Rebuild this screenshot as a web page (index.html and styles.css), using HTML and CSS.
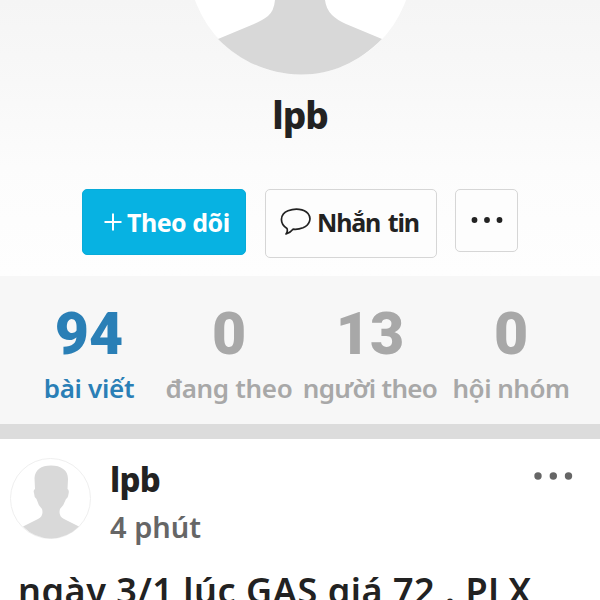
FILE: index.html
```
<!DOCTYPE html>
<html lang="vi">
<head>
<meta charset="utf-8">
<title>lpb</title>
<link rel="stylesheet" href="styles.css">
</head>
<body>
<header class="profile">
  <svg class="portrait" width="240" height="75" viewBox="180 0 240 75">
    <circle cx="300.500" cy="-37.500" r="112" fill="#fff"/>
    <path d="M275 0Q274 11 268 16Q263 20 254 24L218 39C242 63 270 74 300 74.500S358 63 382 39L346 24Q337 20 332 15Q326 9 325 0Z" fill="#d8d8d8"/>
  </svg>
  <h1 class="name"><span>lpb</span></h1>
  <div class="actions">
    <button class="button follow">
      <svg width="18" height="20" viewBox="0 0 18 20"><path d="M9 1.500v17M.5 10h17" stroke="#fff" stroke-width="2"/></svg>
      <span class="follow-text">Theo dõi</span>
    </button>
    <button class="button message">
      <svg width="32" height="28" viewBox="0 0 32 28"><path d="M7 20.500C-1 15.500 0 6 8 2.800C15 0 24 .7 28 5.500C32 10.500 29.500 17 23 19.800Q18 21.800 13 21.200Q10.500 24.500 6 26Q8 23.500 7 20.500Z" fill="none" stroke="#222" stroke-width="1.700" stroke-linejoin="round"/></svg>
      <span class="message-text">Nhắn tin</span>
    </button>
    <button class="button more">
      <svg width="32" height="6" viewBox="0 0 32 6" fill="#222"><circle cx="3.500" cy="3" r="2.900"/><circle cx="16" cy="3" r="2.900"/><circle cx="28.500" cy="3" r="2.900"/></svg>
    </button>
  </div>
</header>
<nav class="stats">
  <a class="stat active"><b>94</b><span>bài viết</span></a>
  <a class="stat"><b>0</b><span>đang theo</span></a>
  <a class="stat"><b>13</b><span class="followers">người theo</span></a>
  <a class="stat"><b>0</b><span class="groups">hội nhóm</span></a>
</nav>
<article class="post">
  <div class="post-head">
    <svg class="avatar" width="82" height="82" viewBox="0 0 82 82">
      <circle cx="40.500" cy="40.500" r="40" fill="#fff" stroke="#efefef"/>
      <path d="M41 7.500C51 7.500 58 12 58 21L57.500 31Q59.500 32 58.500 36Q58 40 56 41Q54 47 50 51Q48 58 54 61L69 68.500Q57 80 41 80.500Q24 80 13 68.500L28 61Q34 58 32 51Q28 47 26.500 41Q24 39 24 35Q23 32 25 31L24.500 20C25 12 31 7.500 41 7.500Z" fill="#d9d9d9"/>
    </svg>
    <div class="byline">
      <strong class="author">lpb</strong>
      <span class="time">4 phút</span>
    </div>
    <svg class="post-more" width="40" height="8" viewBox="0 0 40 8" fill="#666"><circle cx="5" cy="4" r="3.700"/><circle cx="20.300" cy="4" r="3.700"/><circle cx="35.500" cy="4" r="3.700"/></svg>
  </div>
  <p class="content">ngày 3/1 lúc GAS giá 72 . PLX</p>
</article>
</body>
</html>
```

FILE: styles.css
```
* { box-sizing: border-box; }
html { height: 100%; overflow: hidden; }
body { margin: 0; height: 600px; overflow: hidden; background: #fff; color: #222; font-family: "Noto Sans", sans-serif; white-space: nowrap; }
svg { display: block; flex: none; }
.profile { height: 276px; background: linear-gradient(#f5f5f5, #f8f8f8 30%, #fcfcfc 60%, #fefefe); }
.portrait { margin: 0 auto; }
.name { margin: 15px 0 0; height: 50px; line-height: 50px; text-align: center; font-size: 37px; font-weight: 800; letter-spacing: -1.1px; }
.actions { display: flex; align-items: flex-start; padding: 49px 0 0 82px; }
.button { display: flex; align-items: center; margin: 0; padding: 0; border: 1.5px solid #d6d6d6; border-radius: 5px; background: #fdfdfd; color: #222; font: 700 25px "Noto Sans", sans-serif; }
.follow { width: 164px; height: 66px; padding: 0 0 1px 21px; gap: 5px; border-color: #08abd9; background: #07b2e2; color: #fff; }
.follow-text { letter-spacing: -.5px; }
.message { width: 172px; height: 69px; margin-left: 19px; padding: 0 0 3px 14px; gap: 5px; }
.message-text { letter-spacing: -1.2px; word-spacing: 2.5px; }
.more { width: 63px; height: 63px; margin-left: 18px; padding-bottom: 2px; justify-content: center; }
.stats { display: grid; grid-template-columns: 132px 148px 134px 148px; padding: 31px 0 0 23px; height: 148px; background: #f7f7f7; color: #a8a8a8; }
.stat { display: flex; flex-direction: column; align-items: center; }
.stat b { height: 54px; font: 900 59px/54px Roboto, sans-serif; }
.stat span { height: 40px; line-height: 40px; margin-top: 7px; font-size: 26px; font-weight: 600; letter-spacing: -.3px; }
.stat .followers { letter-spacing: -.7px; }
.stat .groups { letter-spacing: -.5px; }
.active { color: #2a7fb6; }
.post { border-top: 15px solid #dcdcdc; height: 176px; }
.post-head { display: flex; padding: 19px 0 0 10px; height: 127px; }
.byline { display: flex; flex-direction: column; width: 440px; padding-left: 18px; }
.author { height: 43px; line-height: 43px; font-size: 33px; font-weight: 800; letter-spacing: -.7px; }
.time { height: 52px; line-height: 52px; font-size: 29px; font-weight: 600; color: #666; }
.post-more { margin-top: 14px; margin-left: 1px; }
.content { margin: 0; padding-left: 18px; line-height: 50px; font-size: 36px; font-weight: 600; letter-spacing: .53px; }
```
